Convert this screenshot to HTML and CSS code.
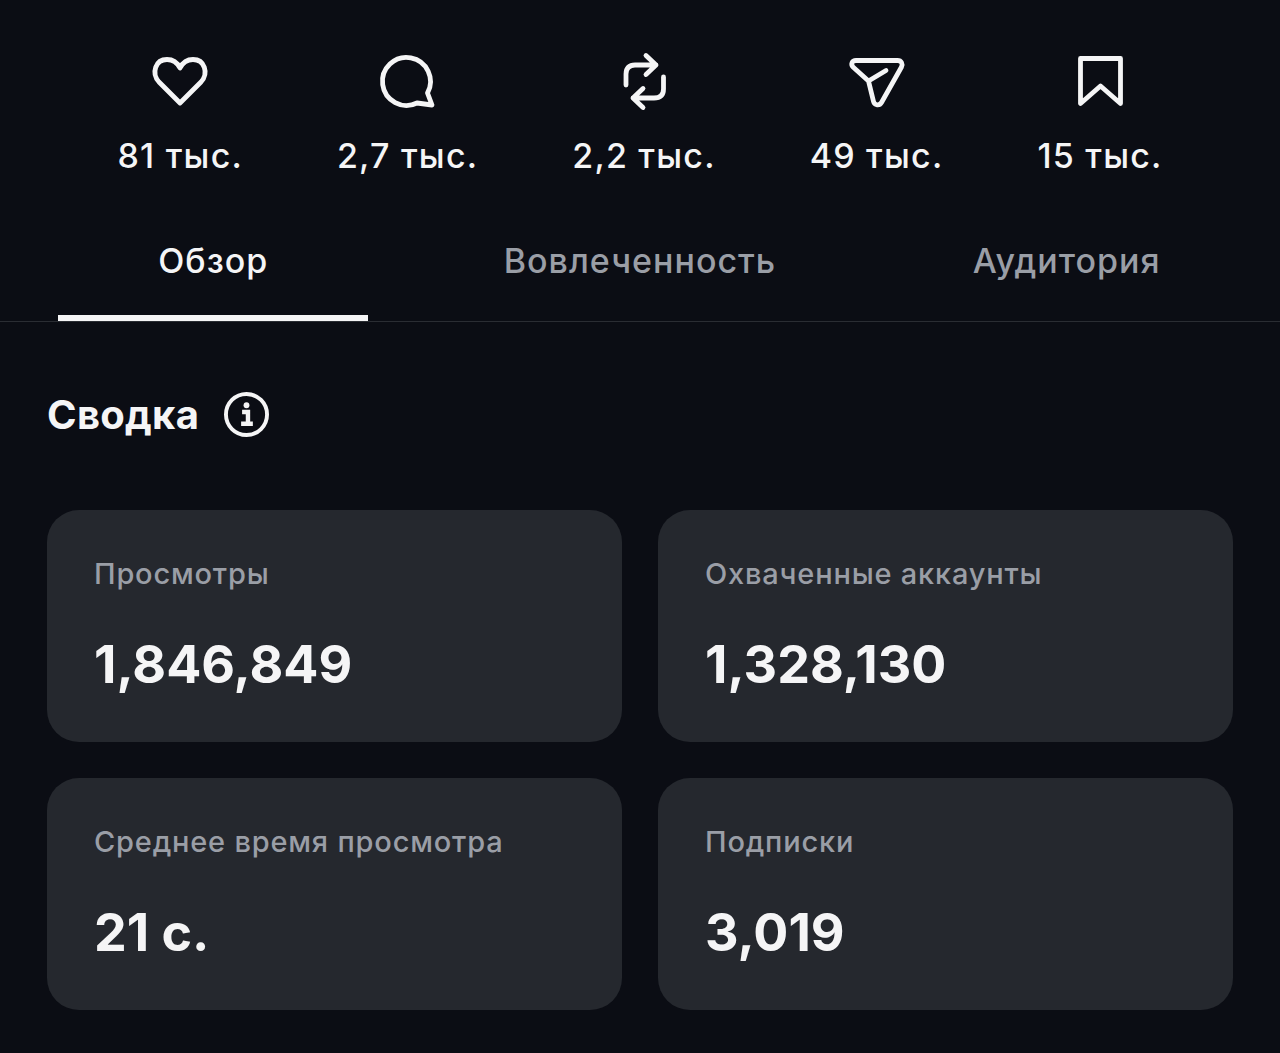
FILE: index.html
```html
<!DOCTYPE html>
<html lang="ru">

<head>
    <meta charset="utf-8">
    <meta name="viewport" content="width=device-width, initial-scale=1.0">
    <title>Статистика</title>
    <link rel="stylesheet" href="styles.css">
</head>

<body>
    <section class="stats">
        <div class="stat">
            <svg class="stat-icon" viewBox="0 0 60 60"><path d="M30 51 L9 30 C1 21 5.500 7.500 17 7.500 C23 7.500 27.500 11 30 16 C32.500 11 37 7.500 43 7.500 C54.500 7.500 59 21 51 30 Z"/></svg>
            <span>81 тыс.</span>
        </div>
        <div class="stat">
            <svg class="stat-icon" viewBox="0 0 60 60"><path d="M54 53 L49.500 41 A24 24 0 1 0 39 51 Z"/></svg>
            <span>2,7 тыс.</span>
        </div>
        <div class="stat">
            <svg class="stat-icon" viewBox="0 0 60 60"><path d="M12 33 V22 Q12 13 21 13 H42 M32 3.500 L42 13 L32 22.500 M49.500 25 V37 Q49.500 46 40 46 H19 M29 36.500 L19 46 L29 55.500"/></svg>
            <span>2,2 тыс.</span>
        </div>
        <div class="stat">
            <svg class="stat-icon" viewBox="0 0 60 60"><path d="M21.500 29 L6 15 C3.500 12 5 8.500 9 8.500 H50.500 C54.500 8.500 56 12 54.500 15 L34.500 50.500 C32.500 54 27.500 53.500 26.500 49.500 Z M21.500 29 L39 18.500"/></svg>
            <span>49 тыс.</span>
        </div>
        <div class="stat">
            <svg class="stat-icon" viewBox="0 0 60 60"><path d="M10.500 6.500 H50.500 V51.500 L30.500 34 L10.500 51.500 Z"/></svg>
            <span>15 тыс.</span>
        </div>
    </section>

    <nav class="tabs">
        <a class="tab active" href="#">Обзор</a>
        <a class="tab" href="#">Вовлеченность</a>
        <a class="tab" href="#">Аудитория</a>
    </nav>

    <section class="summary">
        <div class="summary-head">
            <h2>Сводка</h2>
            <svg class="info" viewBox="0 0 46 46">
                <circle cx="23" cy="23" r="21"/>
                <circle class="info-dot" cx="23" cy="13.500" r="3"/>
                <path class="info-stem" d="M18.500 20.500 H24.500 V31.500 M17.500 32.500 H29.500"/>
            </svg>
        </div>
        <div class="cards">
            <article class="card">
                <p>Просмотры</p>
                <strong>1,846,849</strong>
            </article>
            <article class="card">
                <p>Охваченные аккаунты</p>
                <strong>1,328,130</strong>
            </article>
            <article class="card">
                <p>Среднее время просмотра</p>
                <strong>21 с.</strong>
            </article>
            <article class="card">
                <p>Подписки</p>
                <strong>3,019</strong>
            </article>
        </div>
    </section>
</body></html>
```

FILE: styles.css
```css
body {
    background-color: #0b0d14;
    margin: 0;
    color: #f5f5f6;
    font-family: 'Inter', 'Roboto', sans-serif;
}

/* stats row */

.stats {
    display: flex;
    justify-content: center;
    gap: 94px;
    padding-top: 52px;
}

.stat {
    display: flex;
    flex-direction: column;
    align-items: center;
    gap: 23px;
    font-size: 34px;
    line-height: 42px;
    font-weight: 500;
    letter-spacing: 1.2px;
}

.stat-icon {
    width: 60px;
    height: 60px;
    fill: none;
    stroke: #f5f5f6;
    stroke-width: 4.800;
    stroke-linecap: round;
    stroke-linejoin: round;
}

/* tabs */

.tabs {
    display: grid;
    grid-template-columns: repeat(3, 1fr);
    height: 112px;
    margin-top: 32px;
    border-bottom: 1px solid #2a2d33;
}

.tab {
    display: flex;
    justify-content: center;
    padding-top: 32px;
    box-sizing: border-box;
    width: 310px;
    justify-self: center;
    font-size: 34px;
    line-height: 40px;
    font-weight: 500;
    letter-spacing: 1px;
    color: #9a9ea6;
    text-decoration: none;
}

.tab.active {
    color: #f5f5f6;
    border-bottom: 6px solid #f5f5f6;
}

/* summary */

.summary {
    padding: 0 47px;
}

.summary-head {
    display: flex;
    align-items: center;
    gap: 25px;
    height: 46px;
    margin-top: 69px;
}

.summary-head h2 {
    margin: 0;
    font-size: 40px;
    font-weight: 700;
    letter-spacing: 0.3px;
}

.info {
    width: 45px;
    height: 45px;
    fill: none;
    stroke: #f5f5f6;
    stroke-width: 4;
}

.info-dot {
    fill: #f5f5f6;
    stroke: none;
}

.info-stem {
    stroke-width: 4.500;
}

.cards {
    display: grid;
    grid-template-columns: 575px 575px;
    gap: 36px;
    margin-top: 73px;
}

.card {
    height: 232px;
    box-sizing: border-box;
    padding: 46px 47px 0;
    border-radius: 32px;
    background-color: #25282e;
}

.card p {
    margin: 0;
    font-size: 29px;
    line-height: 36px;
    font-weight: 500;
    letter-spacing: 0.8px;
    color: #9a9ea6;
}

.card strong {
    display: block;
    margin-top: 41px;
    font-size: 52px;
    line-height: 64px;
    font-weight: 700;
}
```
